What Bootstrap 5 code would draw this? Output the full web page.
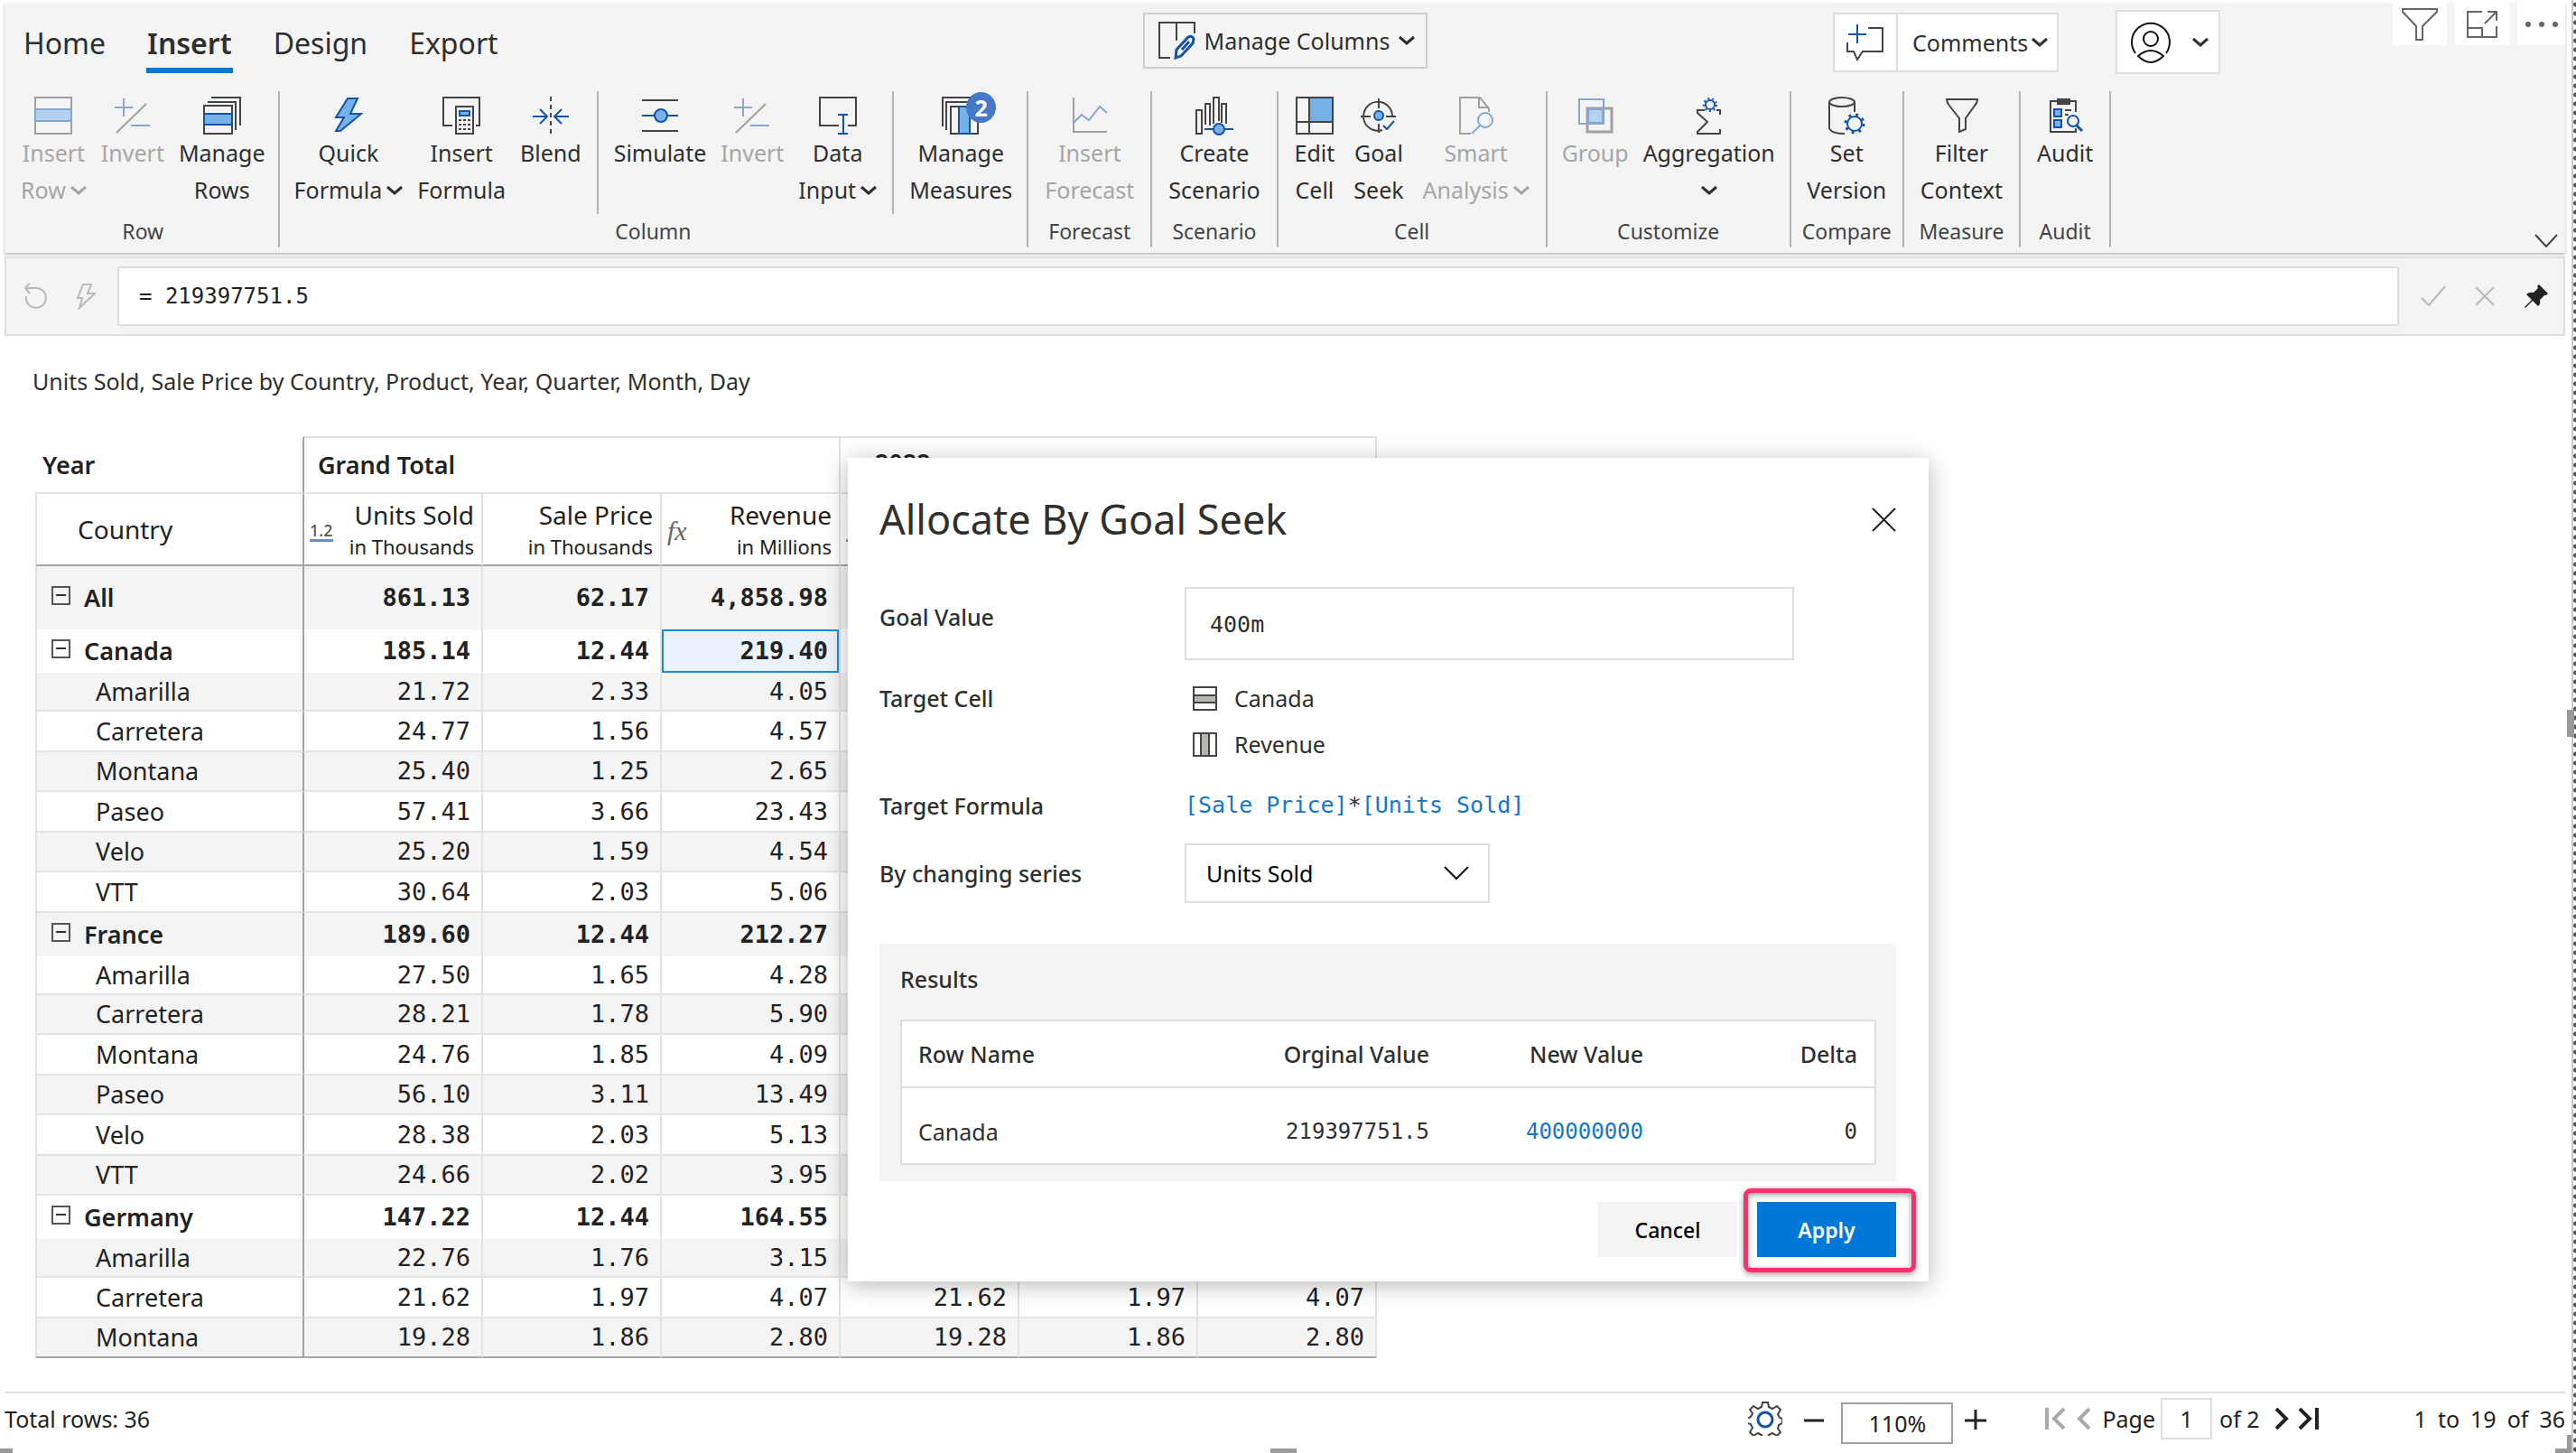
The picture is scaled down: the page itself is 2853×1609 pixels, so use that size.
<!DOCTYPE html>
<html lang="en">
<head>
<meta charset="utf-8">
<meta name="viewport" content="width=device-width, initial-scale=1">
<title>Allocate By Goal Seek</title>
<link href="https://cdn.jsdelivr.net/npm/bootstrap@5.3.0/dist/css/bootstrap.min.css" rel="stylesheet">
<style>
:root{--ink:#2f2f2e;--soft:#a6a6a6;--line:#dedede;--pane:#f4f4f4;--blue:#0078d7;--navy:#1353a8;--sky:#76b1e8}
body{font-family:"Noto Sans","Open Sans",sans-serif;font-size:25px;line-height:34px;color:var(--ink);background:#fff}
.mono{font-family:"DejaVu Sans Mono","Liberation Mono",monospace}
.screen{min-height:100vh;padding:3px 12px 0 5px;position:relative}
button{color:inherit}
svg{display:block;flex:none;fill:none;stroke:#444;stroke-width:2}
svg.chev{stroke:currentColor;stroke-width:3}
.ib{stroke:var(--navy)} .fb{fill:var(--sky);stroke:var(--navy)}
.off svg{stroke:#a0a0a0} .off .ib{stroke:#85a7d4} .off .fb{fill:#b5d3f0;stroke:#85a7d4}
.off svg.chev{stroke:currentColor}
/* ribbon */
.ribbon{background:var(--pane);height:277px;box-shadow:0 2px 3px #bbb}
.topbar{display:grid;grid-template-columns:1fr auto 1fr;height:98px;align-items:start}
.tabs{padding:23px 0 0 20px;gap:44px}
.tabs a{font-size:32px;line-height:44px;color:var(--ink);text-decoration:none;padding:0 1px 5px;border-bottom:6px solid transparent}
.tabs a.active{font-weight:600;border-color:var(--blue)}
.mcols{margin-top:11px;height:62px;width:315px;border:2px solid #cfcfcf;background:transparent;padding:0 12px 0 15px}
.boxed{background:#fff;border:2px solid var(--line)}
.cmt{margin-top:11px;height:66px}
.cmt button{background:none;border:0;padding:0}
.cmt .addc{width:70px;border-right:2px solid var(--line)}
.cmt .menuc{padding:0 12px 0 16px;gap:4px;width:176px}
.userb{margin:8px 191px 0 63px;width:116px;height:71px;padding:0 11px 0 14px}
.tools{gap:9px}
.tools button{background:#fff;border:0;width:60px;height:47px;padding:0}
.tools button:last-child{width:53px}
.tools svg{stroke:#666}
.rgroup{border-right:2px solid #b3b3b3;padding:0 10px;height:173px}
.rgroup.first{padding-right:6px}
.rgroup.snug{padding:0 8px}
.rgroup.wide .items{gap:5px}
.rgroup .items{height:136px}
.rgroup .cap{font-size:23px;line-height:38px;text-align:center;color:#444}
.rb{border:0;background:none;padding:6px 8px 0;text-align:center;line-height:41px;display:flex;flex-direction:column;align-items:center}
.rb svg.ico{height:42px;width:42px;overflow:visible}
.rb .ln{display:flex;align-items:center;gap:5px;white-space:nowrap;height:41px}
.rb.off{color:var(--soft)}
.vr2{width:2px;background:#b3b3b3;margin:0 9px;height:136px}
.cnt{position:absolute;left:27px;top:-5px;width:33px;height:34px;border-radius:50%;background:#4678c8;color:#fff;font-weight:700;line-height:34px;text-align:center}
/* formula bar */
.fbar{margin-top:4px;height:88px;background:var(--pane);border:2px solid var(--line);padding:0 16px 0 19px}
.fbar input{height:66px;border:2px solid var(--line);font-size:24px;padding:0 22px;color:#222;min-width:0;outline:0}
.fbar button{border:0;background:none;padding:0}
.fbar svg{stroke:#b9b9b9}
/* matrix */
.subt{margin:33px 0 44px 31px}
.matrix{margin-left:34px;table-layout:fixed;width:1486px;border-collapse:separate;border-spacing:0;font-size:27px;color:#222}
.matrix td,.matrix th{padding:0;height:44px;border-right:2px solid #e3e3e3;border-bottom:2px solid #e3e3e3;font-weight:400;line-height:34px;white-space:nowrap;vertical-align:middle}
.matrix .c1{width:298px}
.matrix td:first-child,.matrix th:first-child{border-right-color:#a3a3a3}
.matrix tbody td:first-child,.matrix tbody th:first-child,.matrix .r2 th:first-child{border-left:2px solid #e3e3e3}
.matrix .r1 th{height:64px;font-weight:600;border-top:2px solid #e3e3e3}
.matrix .r1 th:first-child{padding-left:8px;border-top-color:transparent}
.matrix .r1 th+th{padding-left:15px}
.matrix .r1 th+th+th{padding:0 0 6px 38px}
.matrix .r2 th{height:80px;border-bottom-color:#a6a6a6;font-size:28px}
.matrix .r2 th:first-child{padding-left:45px}
.matrix .r2 small{display:block;font-size:22px;line-height:36px}
.hd{display:flex;align-items:center;justify-content:space-between;padding:4px 8px 0 6px;text-align:right}
.dec{font-size:18px;line-height:20px;border-bottom:3px solid #5f92cc;color:#555;font-weight:500}
.fx{font-family:"Liberation Serif",serif;font-style:italic;font-size:30px;color:#666}
.matrix tbody td{text-align:right;padding-right:12px;font-family:"DejaVu Sans Mono",monospace}
.matrix tbody th{padding-left:65px}
.matrix tbody tr:nth-child(even)>*{height:45px}
.matrix tbody tr:nth-child(odd)>*{background:var(--pane)}
.matrix tbody tr.par>*{height:48px;font-weight:700;border-bottom:0}
.matrix tbody tr.par th{padding-left:16px;font-weight:600}
.matrix tbody tr.par+tr:not(.par)>*{height:43px}
.matrix tbody tr.all>*{height:70px}
.matrix tbody tr:last-child>*{border-bottom-color:#a6a6a6}
.matrix td.sel{background:#eaf3fc!important;box-shadow:0 0 0 2px #2287d8 inset}
.tw{display:flex;align-items:center;gap:15px}
.tw button{width:21px;height:21px;border:2px solid #555;background:none;padding:0;margin-bottom:6px;display:flex;align-items:center;justify-content:center}
.tw button::before{content:"";width:11px;height:2px;background:#333}
/* footer */
.foot{border-top:2px solid var(--line);height:68px;padding-top:5px;color:#222}
.foot .bar{height:46px}
.foot button{border:0;background:none;padding:0}
.foot svg{stroke:#222;stroke-width:4}
.foot .dim svg{stroke:#a9a9a9}
.foot input{text-align:center;color:#222;padding:0;outline:0}
.zin{width:124px;height:46px;border:2px solid #a0a0a0;margin:10px 13px 0 19px}
.pin{width:57px;height:46px;border:2px solid var(--line);margin:0 8px 0 6px}
.rng{margin-left:104px;gap:12px}
/* dialog */
.dlg{position:absolute;left:939px;top:507px;width:1197px;background:#fff;box-shadow:0 4px 24px rgba(0,0,0,.28);padding:38px 36px 27px 35px}
.dlg h1{font-size:45px;line-height:60px;font-weight:400;margin:0}
.dlg .lab{width:338px;flex:none;font-weight:500}
.dlg input{width:675px;height:81px;border:2px solid var(--line);padding:2px 26px 0;font-size:25px;color:var(--ink);outline:0}
.goal{margin-top:45px}
.goal .lab{padding-top:16px}
.cellrow{margin-top:25px}
.tc{padding-left:9px;display:grid;gap:17px}
.tc div{gap:19px}
.frow{margin-top:34px}
.srow{margin-top:25px}
.ser{position:relative;width:338px}
.ser select{width:100%;height:66px;border:2px solid var(--line);border-radius:0;background:#fff;padding:0 22px;appearance:none;color:#000}
.ser svg{position:absolute;right:23px;top:25px;pointer-events:none}
.res{background:var(--pane);padding:22px 22px 18px 23px;margin-top:45px}
.res h2{font-size:25px;line-height:34px;font-weight:500;margin:0 0 28px}
.rt{width:100%;background:#fff;border:2px solid var(--line);table-layout:fixed;border-collapse:separate;border-spacing:0}
.rt th,.rt td{padding:0 19px 0 18px;height:74px;font-weight:500;text-align:right}
.rt th{border-bottom:2px solid var(--line)}
.rt td{height:83px;padding-top:12px;font-weight:400;font-size:24px}
.rt tr>:first-child{text-align:left;font-size:25px}
.rt .w{width:237px}
.act{margin-top:23px;gap:22px}
.act button{width:154px;height:61px;border:0;font-size:23px;font-weight:500;background:var(--pane);color:#000}
.act .go{background:var(--blue);color:#fff;font-weight:600}
.hl{position:relative}
.hl::after{content:"";position:absolute;inset:-15px -22px -17px -15px;border:5px solid #ff2e6c;border-radius:8px;box-shadow:0 2px 6px rgba(0,0,0,.4),0 2px 6px rgba(0,0,0,.4) inset;pointer-events:none}
.blu{color:#1177d1}
/* selection frame of the visual */
.edge{position:absolute;right:0;top:0;bottom:0;width:5px;border-left:2px solid #c9c9c9;background:radial-gradient(circle,#555 2px,transparent 3px) 0 0/5px 10px}
.grip{position:absolute;background:#999}
.g1{left:0;bottom:0;width:14px;height:5px}.g2{left:49.3%;bottom:0;width:29px;height:5px}.g3{right:5px;bottom:0;width:18px;height:5px}.g4{right:5px;bottom:0;width:5px;height:20px}.g5{right:2px;top:786px;width:8px;height:30px}
</style>
</head>
<body>
<div class="screen d-flex flex-column overflow-hidden">
<header class="ribbon">
 <div class="topbar">
  <nav class="tabs d-flex"><a href="#">Home</a><a href="#" class="active">Insert</a><a href="#">Design</a><a href="#">Export</a></nav>
  <button class="mcols d-flex align-items-center justify-content-between"><svg width="42" height="42"><path d="M13 40H1V1h39v12M20 1v20"/><path class="ib" stroke-width="3" d="M19 40l1-9 13-14q4-2 6 2l-1 5-13 14zM26 31l8-9"/></svg>Manage Columns<svg class="chev" width="18" height="12"><path d="M1 2l8 7 8-7"/></svg></button>
  <div class="d-flex justify-content-end align-items-start">
   <div class="cmt boxed d-flex"><button class="addc d-flex align-items-center justify-content-center" aria-label="Add comment"><svg width="42" height="42"><path d="M24 5h16v26H18l-6 9-4-9H1V21"/><path class="ib" d="M12 1v21M2 12h20"/></svg></button><button class="menuc d-flex align-items-center">Comments<svg class="chev" width="18" height="12"><path d="M1 2l8 7 8-7"/></svg></button></div>
   <button class="userb boxed d-flex align-items-center justify-content-between" aria-label="Account"><svg width="46" height="48" style="stroke:#111;stroke-width:2"><path d="M6 36A21 21 0 1 1 40 36"/><circle cx="23" cy="20" r="8"/><path d="M9 39q14-12 28 0-14 14-28 0z"/></svg><svg class="chev" width="18" height="12"><path d="M1 2l8 7 8-7"/></svg></button>
   <div class="tools d-flex">
    <button class="d-flex align-items-center justify-content-center" aria-label="Filter"><svg width="42" height="38" stroke-width="3"><path d="M2 2h38v3L24 21v15h-7V21L2 5z"/></svg></button>
    <button class="d-flex align-items-center justify-content-center" aria-label="Focus mode"><svg width="36" height="32" stroke-width="3"><path d="M18 2H2v28h32V18M24 2h10v10M34 2L21 15M2 20h16v10"/></svg></button>
    <button class="d-flex align-items-center justify-content-center" aria-label="More options"><svg width="38" height="8" style="fill:#666;stroke:none"><circle cx="4" cy="4" r="3"/><circle cx="19" cy="4" r="3"/><circle cx="34" cy="4" r="3"/></svg></button>
   </div>
  </div>
 </div>
 <div class="d-flex position-relative">
  <div class="rgroup first"><div class="items d-flex">
   <button class="rb off" disabled><svg class="ico" viewBox="0 0 42 42"><path d="M1 1h40v40H1z"/><path class="fb" d="M1 14h40v13H1z"/></svg><span class="ln">Insert</span><span class="ln">Row<svg class="chev" width="18" height="12"><path d="M1 2l8 7 8-7"/></svg></span></button>
   <button class="rb off" disabled><svg class="ico" viewBox="0 0 42 42"><path d="M3 40L36 8"/><path class="ib" d="M11 2v20M1 12h20M19 32h21"/></svg><span class="ln">Invert</span></button>
   <button class="rb"><svg class="ico" viewBox="0 0 42 42"><path d="M1 10h31v31H1zM5 6h31v31M9 1h32v31"/><path class="fb" d="M1 19h31v12H1z"/></svg><span class="ln">Manage</span><span class="ln">Rows</span></button>
  </div><div class="cap">Row</div></div>
  <div class="rgroup snug"><div class="items d-flex">
   <button class="rb"><svg class="ico" viewBox="0 0 42 42"><path class="fb" d="M20 2h11l-8 17h12L12 38H7l9-15H7z"/></svg><span class="ln">Quick</span><span class="ln">Formula<svg class="chev" width="18" height="12"><path d="M1 2l8 7 8-7"/></svg></span></button>
   <button class="rb"><svg class="ico" viewBox="0 0 42 42"><path d="M11 32H1V1h40v31h-4M15 11h19v30H15z"/><path class="fb" d="M19 16h11v5H19z"/><path stroke-dasharray="3 2" d="M18 26h13M18 31h13M18 36h13"/></svg><span class="ln">Insert</span><span class="ln">Formula</span></button>
   <button class="rb"><svg class="ico" viewBox="0 0 42 42"><path stroke-dasharray="5 4" d="M21 0v42"/><path class="ib" d="M1 22h15M9 14l8 8-8 8M41 22H26M33 14l-8 8 8 8"/></svg><span class="ln">Blend</span></button>
   <div class="vr2"></div>
   <button class="rb"><svg class="ico" viewBox="0 0 42 42"><path d="M1 4h40M1 38h40"/><path class="ib" d="M1 21h40"/><circle class="fb" cx="22" cy="21" r="7"/></svg><span class="ln">Simulate</span></button>
   <button class="rb off" disabled><svg class="ico" viewBox="0 0 42 42"><path d="M3 40L36 8"/><path class="ib" d="M11 2v20M1 12h20M19 32h21"/></svg><span class="ln">Invert</span></button>
   <button class="rb"><svg class="ico" viewBox="0 0 42 42"><path d="M22 32H1V1h40v31h-9"/><path class="ib" d="M27 20v20M21 20h11M21 41h11"/></svg><span class="ln">Data</span><span class="ln">Input<svg class="chev" width="18" height="12"><path d="M1 2l8 7 8-7"/></svg></span></button>
   <div class="vr2"></div>
   <button class="rb"><span class="position-relative"><svg class="ico" viewBox="0 0 42 42"><path d="M1 33V1h32M5 37V6h30M10 41V11h30v30z"/><path class="fb" d="M19 11h12v30H19z"/></svg><span class="cnt">2</span></span><span class="ln">Manage</span><span class="ln">Measures</span></button>
  </div><div class="cap">Column</div></div>
  <div class="rgroup"><div class="items d-flex">
   <button class="rb off" disabled><svg class="ico" viewBox="0 0 42 42"><path d="M3 1v38h37"/><path class="ib" d="M3 29l9-9 8 6 12-15 8 7"/></svg><span class="ln">Insert</span><span class="ln">Forecast</span></button>
  </div><div class="cap">Forecast</div></div>
  <div class="rgroup"><div class="items d-flex">
   <button class="rb"><svg class="ico" viewBox="0 0 42 42"><path d="M1 15h6v26H1zM11 31V8h5v24M20 30V1h6v26M29 29V8h5v22"/><path class="ib" d="M10 36h32"/><circle class="fb" cx="26" cy="36" r="6"/></svg><span class="ln">Create</span><span class="ln">Scenario</span></button>
  </div><div class="cap">Scenario</div></div>
  <div class="rgroup wide"><div class="items d-flex">
   <button class="rb"><svg class="ico" viewBox="0 0 42 42"><path fill="#76b1e8" stroke="none" d="M15 1h26v27H15z"/><path d="M1 1h40v40H1zM15 1v40M1 28h40"/></svg><span class="ln">Edit</span><span class="ln">Cell</span></button>
   <button class="rb"><svg class="ico" viewBox="0 0 42 42"><path d="M25 37A16 16 0 1 1 36 22M21 2v11M21 30v10M1 22h11M29 22h11"/><circle class="fb" cx="21" cy="21" r="5"/><path class="ib" d="M26 32l4 4 8-9"/></svg><span class="ln">Goal</span><span class="ln">Seek</span></button>
   <button class="rb off" disabled><svg class="ico" viewBox="0 0 42 42"><path d="M15 41H3V1h22l10 12v4M24 1v11h11"/><circle class="ib" cx="31" cy="26" r="8"/><path class="ib" d="M25 32l-9 9"/></svg><span class="ln">Smart</span><span class="ln">Analysis<svg class="chev" width="18" height="12"><path d="M1 2l8 7 8-7"/></svg></span></button>
  </div><div class="cap">Cell</div></div>
  <div class="rgroup snug"><div class="items d-flex">
   <button class="rb off" disabled><svg class="ico" viewBox="0 0 42 42"><path class="ib" d="M3 3h27v27H3z"/><path d="M12 13h27v26H12z" stroke-width="3"/><path class="fb" d="M13 14h16v15H13z"/></svg><span class="ln">Group</span></button>
   <button class="rb"><svg class="ico" viewBox="0 0 42 42"><path d="M16 15H8v3l11 10L8 39v2h25v-5M33 20v-5h-4"/><circle class="ib" cx="22" cy="9" r="5"/><circle class="ib" cx="22" cy="9" r="7" stroke-dasharray="2 3"/></svg><span class="ln">Aggregation</span><span class="ln"><svg class="chev" width="18" height="12"><path d="M1 2l8 7 8-7"/></svg></span></button>
  </div><div class="cap">Customize</div></div>
  <div class="rgroup snug"><div class="items d-flex justify-content-center">
   <button class="rb"><svg class="ico" viewBox="0 0 42 42"><ellipse cx="16" cy="6" rx="14" ry="5"/><path d="M2 6v29q2 6 17 6M30 6v11"/><circle class="ib" cx="30" cy="30" r="8"/><circle class="ib" cx="30" cy="30" r="10" stroke-width="3" stroke-dasharray="3 5"/></svg><span class="ln">Set</span><span class="ln">Version</span></button>
  </div><div class="cap px-1">Compare</div></div>
  <div class="rgroup"><div class="items d-flex justify-content-center">
   <button class="rb"><svg class="ico" viewBox="0 0 42 42"><path d="M5 3h34q0 4-3 7L26 24v12l-7 3V24L8 10Q5 6 5 3z"/></svg><span class="ln">Filter</span><span class="ln">Context</span></button>
  </div><div class="cap px-1">Measure</div></div>
  <div class="rgroup"><div class="items d-flex">
   <button class="rb"><svg class="ico" viewBox="0 0 42 42"><path d="M33 17V5H5v34h28v-4"/><path fill="#444" d="M13 3h13v5H13z"/><path class="fb" d="M9 14h8v8H9zM9 26h8v8H9z"/><path d="M21 15h7M21 20h4"/><circle class="ib" cx="30" cy="27" r="6"/><path class="ib" stroke-width="3" d="M34 32l6 6"/></svg><span class="ln">Audit</span></button>
  </div><div class="cap">Audit</div></div>
  <button class="btn p-0 border-0 position-absolute end-0 bottom-0 me-2" aria-label="Collapse ribbon"><svg width="26" height="15"><path d="M1 1l12 13L25 1"/></svg></button>
 </div>
</header>
<section class="fbar d-flex align-items-center">
 <button aria-label="Undo"><svg width="26" height="30"><path d="M3 15a11 11 0 1 0 9-9H2M7 1L2 6l5 6"/></svg></button>
 <button class="ms-4 ps-2" aria-label="Quick formula"><svg width="22" height="30"><path d="M8 2h9l-4 10h8L4 28l3-11H2z"/></svg></button>
 <input class="mono flex-fill mx-4" aria-label="Formula" value="= 219397751.5">
 <button aria-label="Accept"><svg width="28" height="24"><path d="M1 14l8 8L27 1"/></svg></button>
 <button class="mx-4 px-2" aria-label="Cancel edit"><svg width="22" height="22"><path d="M1 1l20 20M21 1L1 21"/></svg></button>
 <button aria-label="Pin"><svg width="28" height="28" style="fill:#222;stroke:none"><path d="M17 1l10 10-2 2-2 0-5 5q1 5-2 7l-6-6-8 8-1-1 8-8-6-6q3-3 8-2l5-5-1-2z"/></svg></button>
</section>
<div class="subt">Units Sold, Sale Price by Country, Product, Year, Quarter, Month, Day</div>
<table class="matrix">
 <thead>
  <tr class="r1"><th class="c1">Year</th><th colspan="3">Grand Total</th><th colspan="3">2022</th></tr>
  <tr class="r2" id="heads"><th>Country</th></tr>
 </thead>
 <tbody id="rows"></tbody>
</table>
<footer class="foot mt-auto">
 <div class="bar d-flex align-items-center">
  <span class="me-auto">Total rows: 36</span>
  <button aria-label="Settings"><svg width="38" height="38" style="stroke:#444;stroke-width:2"><path d="M16 1h6l1 5 4 2 5-3 4 4-3 5 2 4 3 1v5l-4 2-1 4 3 4-4 4-5-3-4 2-1 4h-6l-1-4-4-2-5 3-4-4 3-5-2-4-4-1v-5l4-2 2-4-3-4 4-4 5 3 4-2z"/><circle class="ib" stroke-width="3" cx="19" cy="20" r="8"/></svg></button>
  <button class="ms-4" aria-label="Zoom out"><svg width="22" height="22" style="stroke-width:3"><path d="M0 13h22"/></svg></button>
  <input class="zin" aria-label="Zoom" value="110%">
  <button aria-label="Zoom in"><svg width="24" height="24" style="stroke-width:3"><path d="M0 14h24M12 2v22"/></svg></button>
  <button class="dim ms-5 ps-3" aria-label="First page"><svg width="26" height="24"><path d="M3 0v24M22 1L11 12l11 11"/></svg></button>
  <button class="dim ms-2" aria-label="Previous page"><svg width="18" height="24"><path d="M16 1L5 12l11 11"/></svg></button>
  <label class="ms-2 ps-1" for="pg">Page</label><input class="pin" id="pg" value="1"><span class="me-3">of 2</span>
  <button aria-label="Next page"><svg width="16" height="24"><path d="M2 1l11 11L2 23"/></svg></button>
  <button class="ms-2" aria-label="Last page"><svg width="27" height="24"><path d="M4 1l11 11L4 23M23 0v24"/></svg></button>
  <span class="rng d-flex"><span>1</span><span>to</span><span>19</span><span>of</span><span>36</span></span>
 </div>
</footer>
<section class="dlg" role="dialog" aria-labelledby="dt">
 <div class="d-flex justify-content-between align-items-center"><h1 id="dt">Allocate By Goal Seek</h1><button class="btn p-0 border-0" aria-label="Close"><svg width="27" height="27" style="stroke:#222;stroke-width:2"><path d="M1 1l25 25M26 1L1 26"/></svg></button></div>
 <div class="d-flex goal"><label class="lab" for="gv">Goal Value</label><input class="mono" id="gv" value="400m"></div>
 <div class="d-flex cellrow"><span class="lab">Target Cell</span><div class="tc"><div class="d-flex align-items-center"><svg width="27" height="27"><path d="M1 1h25v25H1z"/><path fill="#b6b6b0" d="M1 10h25v8H1z"/></svg><span>Canada</span></div><div class="d-flex align-items-center"><svg width="27" height="27"><path d="M1 1h25v25H1z"/><path fill="#b6b6b0" d="M9 1h9v25H9z"/></svg><span>Revenue</span></div></div></div>
 <div class="d-flex frow"><span class="lab">Target Formula</span><span class="mono"><span class="blu">[Sale Price]</span>*<span class="blu">[Units Sold]</span></span></div>
 <div class="d-flex align-items-center srow"><label class="lab" for="sr">By changing series</label><div class="ser"><select id="sr"><option>Units Sold</option></select><svg width="28" height="16" style="stroke:#111"><path d="M1 1l13 13L27 1"/></svg></div></div>
 <div class="res"><h2>Results</h2>
  <table class="rt"><thead><tr><th>Row Name</th><th>Orginal Value</th><th class="w">New Value</th><th class="w">Delta</th></tr></thead>
  <tbody><tr><td>Canada</td><td class="mono">219397751.5</td><td class="mono blu">400000000</td><td class="mono">0</td></tr></tbody></table>
 </div>
 <div class="act d-flex justify-content-end"><button>Cancel</button><span class="hl"><button class="go">Apply</button></span></div>
</section>
<div class="edge"></div><i class="grip g1"></i><i class="grip g2"></i><i class="grip g3"></i><i class="grip g4"></i><i class="grip g5"></i>
</div>
<script>
const heads=[['Units Sold','in Thousands','<span class="dec">1.2</span>'],['Sale Price','in Thousands','<span></span>'],['Revenue','in Millions','<span class="fx">fx</span>'],['','','<span class="dec">1.2</span>'],['','',''],['','','']];
document.getElementById('heads').insertAdjacentHTML('beforeend',heads.map(h=>`<th><div class="hd">${h[2]}<span>${h[0]}<small>${h[1]}</small></span></div></th>`).join(''));
const rows=`+All 861.13 62.17 4,858.98
+Canada 185.14 12.44 219.40
Amarilla 21.72 2.33 4.05
Carretera 24.77 1.56 4.57
Montana 25.40 1.25 2.65
Paseo 57.41 3.66 23.43
Velo 25.20 1.59 4.54
VTT 30.64 2.03 5.06
+France 189.60 12.44 212.27
Amarilla 27.50 1.65 4.28
Carretera 28.21 1.78 5.90
Montana 24.76 1.85 4.09
Paseo 56.10 3.11 13.49
Velo 28.38 2.03 5.13
VTT 24.66 2.02 3.95
+Germany 147.22 12.44 164.55
Amarilla 22.76 1.76 3.15
Carretera 21.62 1.97 4.07 21.62 1.97 4.07
Montana 19.28 1.86 2.80 19.28 1.86 2.80`.split('\n').map(r=>r.split(' '));
document.getElementById('rows').innerHTML=rows.map(([n,...v],i)=>{
 const p=n[0]==='+',name=n.replace('+','');
 const cells=[0,1,2,3,4,5].map(j=>`<td${i===1&&j===2?' class="sel"':''}>${v[j]||''}</td>`).join('');
 return `<tr class="${p?'par':''}${i===0?' all':''}"><th>${p?`<div class="tw"><button aria-label="Collapse ${name}"></button>${name}</div>`:name}</th>${cells}</tr>`;
}).join('');
</script>
<script src="https://cdn.jsdelivr.net/npm/bootstrap@5.3.0/dist/js/bootstrap.bundle.min.js"></script>
</body>
</html>
